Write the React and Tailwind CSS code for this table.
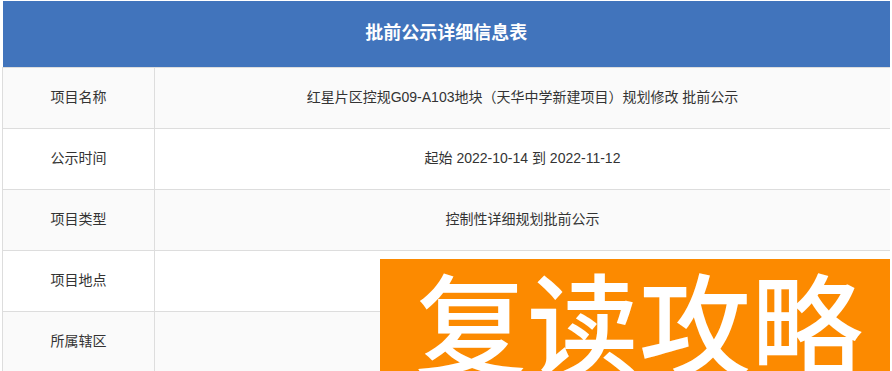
import React from 'react';

const rows = [
  { label: '项目名称', value: '红星片区控规G09-A103地块（天华中学新建项目）规划修改 批前公示' },
  { label: '公示时间', value: '起始 2022-10-14 到 2022-11-12' },
  { label: '项目类型', value: '控制性详细规划批前公示' },
  { label: '项目地点', value: '' },
  { label: '所属辖区', value: '' },
];

export default function App() {
  return (
    <div
      className="relative h-[371px] w-[892px] overflow-hidden bg-white pl-[2px] pr-[2px] pt-px text-[#333]"
      style={{ fontFamily: '"Liberation Sans", "Noto Sans CJK SC", sans-serif' }}
    >
      <table className="w-[888px] border-collapse text-[14px]">
        <thead>
          <tr>
            <th colSpan={2} className="h-[66px] bg-[#4174bc] text-center text-[18px] font-bold text-white">
              批前公示详细信息表
            </th>
          </tr>
        </thead>
        <tbody>
          {rows.map((r, i) => (
            <tr key={r.label} className={i % 2 === 0 ? 'bg-[#fafafa]' : 'bg-white'}>
              <td className="h-[61px] w-[152px] border border-[#dddddd] text-center">{r.label}</td>
              <td className="h-[61px] border border-r-0 border-[#dddddd] text-center">{r.value}</td>
            </tr>
          ))}
        </tbody>
      </table>

      {/* watermark banner */}
      <div className="absolute left-[380px] top-[259px] h-[140px] w-[510px] bg-[#fc8a00] pl-[35px] pt-[5px]">
        <div
          className="whitespace-nowrap text-[112px] font-medium leading-none text-white"
          style={{ fontFamily: '"Noto Sans CJK SC", sans-serif' }}
        >
          复读攻略
        </div>
      </div>
    </div>
  );
}
